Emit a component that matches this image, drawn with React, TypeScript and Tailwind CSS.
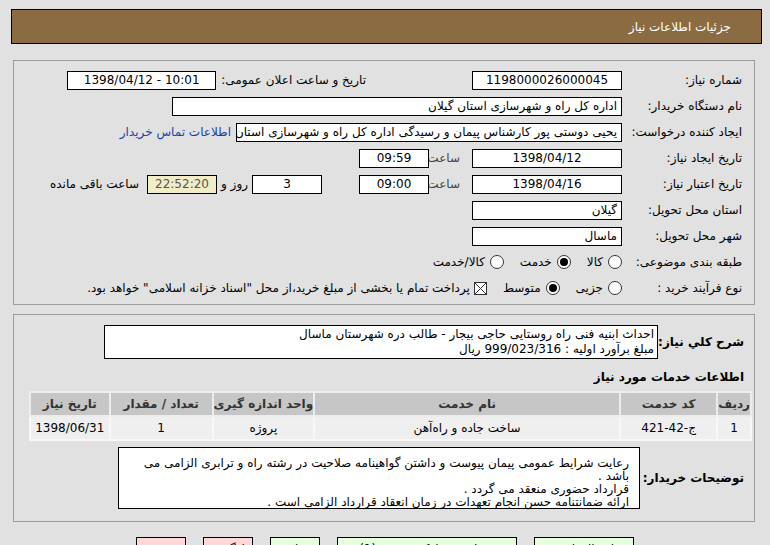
import React from 'react';

// ── Small building blocks ────────────────────────────────────────────────

function Field({
  w, children, align = 'center', className = '', ltr = false,
}: { w: string; children?: React.ReactNode; align?: 'center' | 'right'; className?: string; ltr?: boolean }) {
  return (
    <div
      dir={ltr ? 'ltr' : undefined}
      className={`${w} h-[19px] shrink-0 border border-black bg-white flex items-center overflow-hidden whitespace-nowrap px-[4px] leading-none ${
        align === 'center' ? 'justify-center' : 'justify-start'
      } ${className}`}
    >
      {children}
    </div>
  );
}

function Label({ children }: { children: React.ReactNode }) {
  return <div className="w-[132px] shrink-0 pr-[12px] whitespace-nowrap">{children}</div>;
}

function Row({ children }: { children: React.ReactNode }) {
  return <div className="h-[26px] flex items-center">{children}</div>;
}

function Radio({ checked, label }: { checked?: boolean; label: string }) {
  return (
    <div className="flex items-center gap-[5px] ml-[16px]">
      <span className="w-[14px] h-[14px] rounded-full border border-[#333] bg-white flex items-center justify-center">
        {checked && <span className="w-[8px] h-[8px] rounded-full bg-black" />}
      </span>
      <span>{label}</span>
    </div>
  );
}

function CrossBox() {
  return (
    <svg width="13" height="13" viewBox="0 0 13 13" className="shrink-0">
      <rect x="0.5" y="0.5" width="12" height="12" fill="#fff" stroke="#333" />
      <path d="M1 1L12 12M12 1L1 12" stroke="#333" strokeWidth="1" />
    </svg>
  );
}

const columns = [
  { title: 'ردیف',            w: 'w-[22px]' },
  { title: 'کد خدمت',         w: 'w-[97px]' },
  { title: 'نام خدمت',        w: 'w-[306px]' },
  { title: 'واحد اندازه گیری', w: 'w-[97px]' },
  { title: 'تعداد / مقدار',    w: 'w-[103px]' },
  { title: 'تاریخ نیاز',       w: '' },
];

const rows = [['1', 'ج-42-421', 'ساخت جاده و راه‌آهن', 'پروژه', '1', '1398/06/31']];

// ── Page ─────────────────────────────────────────────────────────────────

export default function App() {
  return (
    <div
      dir="rtl"
      className="w-[770px] h-[545px] overflow-hidden bg-[#e1e1e1] text-[12px] text-black font-['DejaVu_Sans',sans-serif]"
    >
      {/* Title bar */}
      <div className="mt-[9px] mr-[8px] ml-[11px] h-[35px] bg-[#8b6c42] border border-black flex items-center pr-[30px] text-white">
        جزئیات اطلاعات نیاز
      </div>

      {/* Main details */}
      <div className="mt-[16px] mr-[15px] ml-[13px] h-[245px] border border-[#9c9c9c] pt-[6px]">
        <Row>
          <Label>شماره نیاز:</Label>
          <Field w="w-[150px]">1198000026000045</Field>
          <div className="mr-[106px] whitespace-nowrap">تاریخ و ساعت اعلان عمومی:</div>
          <Field w="w-[149px]" className="mr-[5px]" ltr>1398/04/12 - 10:01</Field>
        </Row>

        <Row>
          <Label>نام دستگاه خریدار:</Label>
          <Field w="w-[450px]" align="right">اداره کل راه و شهرسازی استان گیلان</Field>
        </Row>

        <Row>
          <Label>ایجاد کننده درخواست:</Label>
          <Field w="w-[386px]" align="right">
            یحیی دوستی پور کارشناس پیمان و رسیدگی اداره کل راه و شهرسازی استان
          </Field>
          <a className="mr-[5px] text-[#1a3fa8] whitespace-nowrap">اطلاعات تماس خریدار</a>
        </Row>

        <Row>
          <Label>تاریخ ایجاد نیاز:</Label>
          <Field w="w-[150px]">1398/04/12</Field>
          <div className="w-[43px] pr-[12px] text-[#444]">ساعت</div>
          <Field w="w-[70px]">09:59</Field>
        </Row>

        <Row>
          <Label>تاریخ اعتبار نیاز:</Label>
          <Field w="w-[150px]">1398/04/16</Field>
          <div className="w-[43px] pr-[12px] text-[#444]">ساعت</div>
          <Field w="w-[70px]">09:00</Field>
          <Field w="w-[70px]" className="mr-[37px]">3</Field>
          <div className="w-[35px] text-center whitespace-nowrap">روز و</div>
          <Field w="w-[70px]" className="!bg-[#f1edc6] text-[#555]">22:52:20</Field>
          <div className="mr-[8px] whitespace-nowrap">ساعت باقی مانده</div>
        </Row>

        <Row>
          <Label>استان محل تحویل:</Label>
          <Field w="w-[150px]" align="right">گیلان</Field>
        </Row>

        <Row>
          <Label>شهر محل تحویل:</Label>
          <Field w="w-[150px]" align="right">ماسال</Field>
        </Row>

        <Row>
          <Label>طبقه بندی موضوعی:</Label>
          <Radio label="کالا" />
          <Radio label="خدمت" checked />
          <Radio label="کالا/خدمت" />
        </Row>

        <Row>
          <Label>نوع فرآیند خرید :</Label>
          <Radio label="جزیی" />
          <Radio label="متوسط" checked />
          <div className="flex items-center gap-[4px] whitespace-nowrap">
            <CrossBox />
            <span>پرداخت تمام یا بخشی از مبلغ خرید،از محل "اسناد خزانه اسلامی" خواهد بود.</span>
          </div>
        </Row>
      </div>

      {/* Description, services, buyer notes */}
      <div className="mt-[9px] mr-[15px] ml-[13px] h-[208px] border border-[#9c9c9c] pt-[10px] pl-[4px]">
        <div className="flex items-center">
          <div className="w-[96px] shrink-0 pr-[10px] font-bold text-[12px] whitespace-nowrap">شرح کلي نیاز:</div>
          <div className="w-[554px] h-[34px] border border-black bg-white px-[3px] pt-[1px] leading-[15px]">
            <div className="whitespace-nowrap">احداث ابنیه فنی راه روستایی حاجی بیجار - طالب دره شهرستان ماسال</div>
            <div>مبلغ برآورد اولیه : 999/023/316 ریال</div>
          </div>
        </div>

        <div className="mt-[9px] pr-[10px] font-bold">اطلاعات خدمات مورد نیاز</div>

        <table className="mt-[5px] mr-[2px] w-[723px] border border-[#d2d2d2] border-collapse">
          <thead>
            <tr className="h-[24px] bg-[#c6c6c6]">
              {columns.map(c => (
                <th key={c.title} className={`${c.w} border-2 border-[#ececec] font-bold text-[#333] text-center whitespace-nowrap`}>
                  {c.title}
                </th>
              ))}
            </tr>
          </thead>
          <tbody>
            {rows.map(r => (
              <tr key={r[1]} className="h-[24px] bg-[#efefef]">
                {r.map((v, i) => (
                  <td key={i} className="border-2 border-[#f8f8f8] text-center whitespace-nowrap">
                    {v}
                  </td>
                ))}
              </tr>
            ))}
          </tbody>
        </table>

        <div className="mt-[6px] flex items-center">
          <div className="w-[114px] shrink-0 pr-[10px] font-bold whitespace-nowrap">توضیحات خریدار:</div>
          <div className="w-[522px] h-[62px] border border-black bg-white px-[10px] pt-[9px] leading-[13px]">
            <div>رعایت شرایط عمومی پیمان پیوست و داشتن گواهینامه صلاحیت در رشته راه و ترابری الزامی می باشد .</div>
            <div>قرارداد حضوری منعقد می گردد .</div>
            <div>ارائه ضمانتنامه حسن انجام تعهدات در زمان انعقاد قرارداد الزامی است .</div>
          </div>
        </div>
      </div>

      {/* Action buttons */}
      <div className="mt-[15px] flex justify-center gap-[17px]">
        <button className="w-[100px] h-[24px] border border-black bg-[#e8ffe0]">ارسال پاسخ</button>
        <button className="w-[180px] h-[24px] border border-black bg-[#e8ffe0]">مشاهده مدارک پیوست (1)</button>
        <button className="w-[50px] h-[24px] border border-black bg-[#e8ffe0]">چاپ</button>
        <button className="w-[50px] h-[24px] border border-black bg-[#ffd9d9]">بازگشت</button>
        <button className="w-[50px] h-[24px] border border-black bg-[#ffd9d9]">بستن</button>
      </div>
    </div>
  );
}
